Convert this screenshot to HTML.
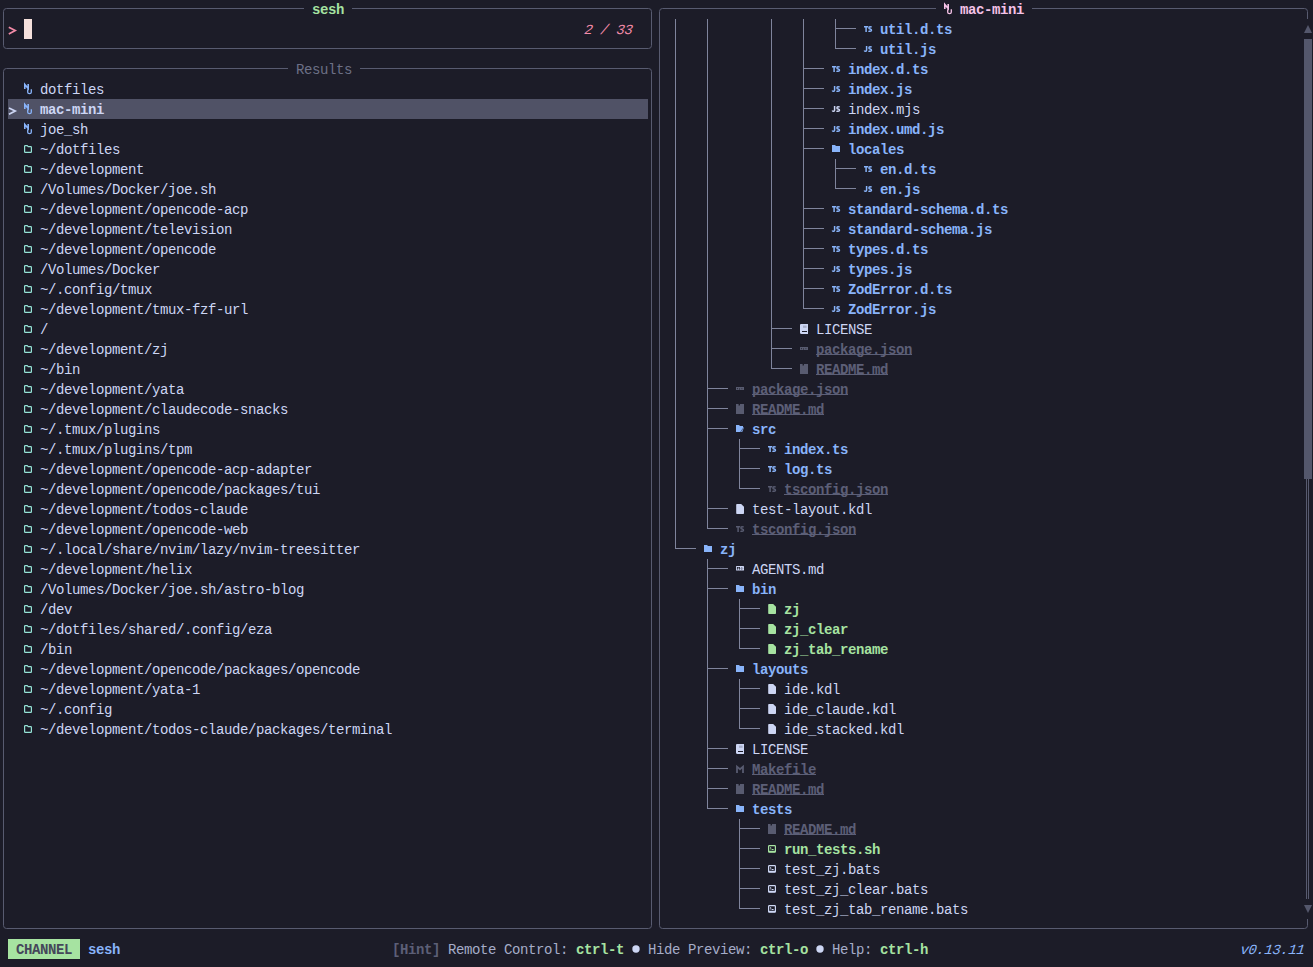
<!DOCTYPE html>
<html><head><meta charset="utf-8"><style>
html,body{margin:0;padding:0;}
body{width:1313px;height:967px;background:#1c1c28;overflow:hidden;position:relative;}
.t{position:absolute;height:20px;line-height:20px;white-space:pre;font-family:"Liberation Mono",monospace;font-size:14.0px;letter-spacing:-0.4014px;text-underline-offset:0px;text-decoration-skip-ink:none;}
svg{position:absolute;left:0;top:0;}
</style></head><body>
<svg width="1313" height="967" viewBox="0 0 1313 967" shape-rendering="auto">
<rect x="3.5" y="8.5" width="648" height="40" rx="3" stroke="#585b70" stroke-width="1" fill="none"/>
<rect x="304" y="7" width="48" height="3" fill="#1c1c28" />
<path d="M8.8,27.3 L15.2,30.6 L8.8,33.9" stroke="#f38ba8" stroke-width="1.7" fill="none"/>
<rect x="24" y="19" width="8" height="20" fill="#f5e0dc" />
<rect x="3.5" y="68.5" width="648" height="860" rx="3" stroke="#585b70" stroke-width="1" fill="none"/>
<rect x="288" y="67" width="72" height="3" fill="#1c1c28" />
<rect x="8" y="99" width="640" height="20" fill="#505266" />
<path d="M9,108 L15.2,111.1 L9,114.2" stroke="#cdd6f4" stroke-width="1.7" fill="none"/>
<path d="M24.8,89 V84.5 L28.2,88.5 V84" stroke="#89b4fa" stroke-width="1.6" fill="none"/>
<path d="M27.7,89.2 V92.3 Q27.7,93.6 29.5,93.6 Q31.3,93.6 31.3,92.3 V89.2" stroke="#89b4fa" stroke-width="1.3" fill="none"/>
<path d="M24.8,109 V104.5 L28.2,108.5 V104" stroke="#89b4fa" stroke-width="1.6" fill="none"/>
<path d="M27.7,109.2 V112.3 Q27.7,113.6 29.5,113.6 Q31.3,113.6 31.3,112.3 V109.2" stroke="#89b4fa" stroke-width="1.3" fill="none"/>
<path d="M24.8,129 V124.5 L28.2,128.5 V124" stroke="#89b4fa" stroke-width="1.6" fill="none"/>
<path d="M27.7,129.2 V132.3 Q27.7,133.6 29.5,133.6 Q31.3,133.6 31.3,132.3 V129.2" stroke="#89b4fa" stroke-width="1.3" fill="none"/>
<path d="M24.6,146.2 Q24.6,145.6 25.4,145.6 H27.2 L28.2,146.6 H30.8 Q31.4,146.6 31.4,147.4 V151.8 Q31.4,152.4 30.8,152.4 H25.2 Q24.6,152.4 24.6,151.8 Z" stroke="#94e2d5" stroke-width="1.2" fill="none"/>
<path d="M24.6,166.2 Q24.6,165.6 25.4,165.6 H27.2 L28.2,166.6 H30.8 Q31.4,166.6 31.4,167.4 V171.8 Q31.4,172.4 30.8,172.4 H25.2 Q24.6,172.4 24.6,171.8 Z" stroke="#94e2d5" stroke-width="1.2" fill="none"/>
<path d="M24.6,186.2 Q24.6,185.6 25.4,185.6 H27.2 L28.2,186.6 H30.8 Q31.4,186.6 31.4,187.4 V191.8 Q31.4,192.4 30.8,192.4 H25.2 Q24.6,192.4 24.6,191.8 Z" stroke="#94e2d5" stroke-width="1.2" fill="none"/>
<path d="M24.6,206.2 Q24.6,205.6 25.4,205.6 H27.2 L28.2,206.6 H30.8 Q31.4,206.6 31.4,207.4 V211.8 Q31.4,212.4 30.8,212.4 H25.2 Q24.6,212.4 24.6,211.8 Z" stroke="#94e2d5" stroke-width="1.2" fill="none"/>
<path d="M24.6,226.2 Q24.6,225.6 25.4,225.6 H27.2 L28.2,226.6 H30.8 Q31.4,226.6 31.4,227.4 V231.8 Q31.4,232.4 30.8,232.4 H25.2 Q24.6,232.4 24.6,231.8 Z" stroke="#94e2d5" stroke-width="1.2" fill="none"/>
<path d="M24.6,246.2 Q24.6,245.6 25.4,245.6 H27.2 L28.2,246.6 H30.8 Q31.4,246.6 31.4,247.4 V251.8 Q31.4,252.4 30.8,252.4 H25.2 Q24.6,252.4 24.6,251.8 Z" stroke="#94e2d5" stroke-width="1.2" fill="none"/>
<path d="M24.6,266.2 Q24.6,265.6 25.4,265.6 H27.2 L28.2,266.6 H30.8 Q31.4,266.6 31.4,267.4 V271.8 Q31.4,272.4 30.8,272.4 H25.2 Q24.6,272.4 24.6,271.8 Z" stroke="#94e2d5" stroke-width="1.2" fill="none"/>
<path d="M24.6,286.2 Q24.6,285.6 25.4,285.6 H27.2 L28.2,286.6 H30.8 Q31.4,286.6 31.4,287.4 V291.8 Q31.4,292.4 30.8,292.4 H25.2 Q24.6,292.4 24.6,291.8 Z" stroke="#94e2d5" stroke-width="1.2" fill="none"/>
<path d="M24.6,306.2 Q24.6,305.6 25.4,305.6 H27.2 L28.2,306.6 H30.8 Q31.4,306.6 31.4,307.4 V311.8 Q31.4,312.4 30.8,312.4 H25.2 Q24.6,312.4 24.6,311.8 Z" stroke="#94e2d5" stroke-width="1.2" fill="none"/>
<path d="M24.6,326.2 Q24.6,325.6 25.4,325.6 H27.2 L28.2,326.6 H30.8 Q31.4,326.6 31.4,327.4 V331.8 Q31.4,332.4 30.8,332.4 H25.2 Q24.6,332.4 24.6,331.8 Z" stroke="#94e2d5" stroke-width="1.2" fill="none"/>
<path d="M24.6,346.2 Q24.6,345.6 25.4,345.6 H27.2 L28.2,346.6 H30.8 Q31.4,346.6 31.4,347.4 V351.8 Q31.4,352.4 30.8,352.4 H25.2 Q24.6,352.4 24.6,351.8 Z" stroke="#94e2d5" stroke-width="1.2" fill="none"/>
<path d="M24.6,366.2 Q24.6,365.6 25.4,365.6 H27.2 L28.2,366.6 H30.8 Q31.4,366.6 31.4,367.4 V371.8 Q31.4,372.4 30.8,372.4 H25.2 Q24.6,372.4 24.6,371.8 Z" stroke="#94e2d5" stroke-width="1.2" fill="none"/>
<path d="M24.6,386.2 Q24.6,385.6 25.4,385.6 H27.2 L28.2,386.6 H30.8 Q31.4,386.6 31.4,387.4 V391.8 Q31.4,392.4 30.8,392.4 H25.2 Q24.6,392.4 24.6,391.8 Z" stroke="#94e2d5" stroke-width="1.2" fill="none"/>
<path d="M24.6,406.2 Q24.6,405.6 25.4,405.6 H27.2 L28.2,406.6 H30.8 Q31.4,406.6 31.4,407.4 V411.8 Q31.4,412.4 30.8,412.4 H25.2 Q24.6,412.4 24.6,411.8 Z" stroke="#94e2d5" stroke-width="1.2" fill="none"/>
<path d="M24.6,426.2 Q24.6,425.6 25.4,425.6 H27.2 L28.2,426.6 H30.8 Q31.4,426.6 31.4,427.4 V431.8 Q31.4,432.4 30.8,432.4 H25.2 Q24.6,432.4 24.6,431.8 Z" stroke="#94e2d5" stroke-width="1.2" fill="none"/>
<path d="M24.6,446.2 Q24.6,445.6 25.4,445.6 H27.2 L28.2,446.6 H30.8 Q31.4,446.6 31.4,447.4 V451.8 Q31.4,452.4 30.8,452.4 H25.2 Q24.6,452.4 24.6,451.8 Z" stroke="#94e2d5" stroke-width="1.2" fill="none"/>
<path d="M24.6,466.2 Q24.6,465.6 25.4,465.6 H27.2 L28.2,466.6 H30.8 Q31.4,466.6 31.4,467.4 V471.8 Q31.4,472.4 30.8,472.4 H25.2 Q24.6,472.4 24.6,471.8 Z" stroke="#94e2d5" stroke-width="1.2" fill="none"/>
<path d="M24.6,486.2 Q24.6,485.6 25.4,485.6 H27.2 L28.2,486.6 H30.8 Q31.4,486.6 31.4,487.4 V491.8 Q31.4,492.4 30.8,492.4 H25.2 Q24.6,492.4 24.6,491.8 Z" stroke="#94e2d5" stroke-width="1.2" fill="none"/>
<path d="M24.6,506.2 Q24.6,505.6 25.4,505.6 H27.2 L28.2,506.6 H30.8 Q31.4,506.6 31.4,507.4 V511.8 Q31.4,512.4 30.8,512.4 H25.2 Q24.6,512.4 24.6,511.8 Z" stroke="#94e2d5" stroke-width="1.2" fill="none"/>
<path d="M24.6,526.2 Q24.6,525.6 25.4,525.6 H27.2 L28.2,526.6 H30.8 Q31.4,526.6 31.4,527.4 V531.8 Q31.4,532.4 30.8,532.4 H25.2 Q24.6,532.4 24.6,531.8 Z" stroke="#94e2d5" stroke-width="1.2" fill="none"/>
<path d="M24.6,546.2 Q24.6,545.6 25.4,545.6 H27.2 L28.2,546.6 H30.8 Q31.4,546.6 31.4,547.4 V551.8 Q31.4,552.4 30.8,552.4 H25.2 Q24.6,552.4 24.6,551.8 Z" stroke="#94e2d5" stroke-width="1.2" fill="none"/>
<path d="M24.6,566.2 Q24.6,565.6 25.4,565.6 H27.2 L28.2,566.6 H30.8 Q31.4,566.6 31.4,567.4 V571.8 Q31.4,572.4 30.8,572.4 H25.2 Q24.6,572.4 24.6,571.8 Z" stroke="#94e2d5" stroke-width="1.2" fill="none"/>
<path d="M24.6,586.2 Q24.6,585.6 25.4,585.6 H27.2 L28.2,586.6 H30.8 Q31.4,586.6 31.4,587.4 V591.8 Q31.4,592.4 30.8,592.4 H25.2 Q24.6,592.4 24.6,591.8 Z" stroke="#94e2d5" stroke-width="1.2" fill="none"/>
<path d="M24.6,606.2 Q24.6,605.6 25.4,605.6 H27.2 L28.2,606.6 H30.8 Q31.4,606.6 31.4,607.4 V611.8 Q31.4,612.4 30.8,612.4 H25.2 Q24.6,612.4 24.6,611.8 Z" stroke="#94e2d5" stroke-width="1.2" fill="none"/>
<path d="M24.6,626.2 Q24.6,625.6 25.4,625.6 H27.2 L28.2,626.6 H30.8 Q31.4,626.6 31.4,627.4 V631.8 Q31.4,632.4 30.8,632.4 H25.2 Q24.6,632.4 24.6,631.8 Z" stroke="#94e2d5" stroke-width="1.2" fill="none"/>
<path d="M24.6,646.2 Q24.6,645.6 25.4,645.6 H27.2 L28.2,646.6 H30.8 Q31.4,646.6 31.4,647.4 V651.8 Q31.4,652.4 30.8,652.4 H25.2 Q24.6,652.4 24.6,651.8 Z" stroke="#94e2d5" stroke-width="1.2" fill="none"/>
<path d="M24.6,666.2 Q24.6,665.6 25.4,665.6 H27.2 L28.2,666.6 H30.8 Q31.4,666.6 31.4,667.4 V671.8 Q31.4,672.4 30.8,672.4 H25.2 Q24.6,672.4 24.6,671.8 Z" stroke="#94e2d5" stroke-width="1.2" fill="none"/>
<path d="M24.6,686.2 Q24.6,685.6 25.4,685.6 H27.2 L28.2,686.6 H30.8 Q31.4,686.6 31.4,687.4 V691.8 Q31.4,692.4 30.8,692.4 H25.2 Q24.6,692.4 24.6,691.8 Z" stroke="#94e2d5" stroke-width="1.2" fill="none"/>
<path d="M24.6,706.2 Q24.6,705.6 25.4,705.6 H27.2 L28.2,706.6 H30.8 Q31.4,706.6 31.4,707.4 V711.8 Q31.4,712.4 30.8,712.4 H25.2 Q24.6,712.4 24.6,711.8 Z" stroke="#94e2d5" stroke-width="1.2" fill="none"/>
<path d="M24.6,726.2 Q24.6,725.6 25.4,725.6 H27.2 L28.2,726.6 H30.8 Q31.4,726.6 31.4,727.4 V731.8 Q31.4,732.4 30.8,732.4 H25.2 Q24.6,732.4 24.6,731.8 Z" stroke="#94e2d5" stroke-width="1.2" fill="none"/>
<rect x="659.5" y="8.5" width="648" height="920" rx="3" stroke="#585b70" stroke-width="1" fill="none"/>
<rect x="936" y="7" width="96" height="3" fill="#1c1c28" />
<rect x="1304" y="19" width="9" height="900" fill="#1c1c28" />
<path d="M944.8,9 V4.5 L948.2,8.5 V4" stroke="#f5c2e7" stroke-width="1.6" fill="none"/>
<path d="M947.7,9.2 V12.3 Q947.7,13.6 949.5,13.6 Q951.3,13.6 951.3,12.3 V9.2" stroke="#f5c2e7" stroke-width="1.3" fill="none"/>
<path d="M1304,33 L1308,25 L1312,33 Z" fill="#54576c"/>
<rect x="1304" y="39" width="8" height="440" fill="#54576c" />
<rect x="1306" y="479" width="1" height="420" fill="#585b70" />
<rect x="1308" y="479" width="1" height="420" fill="#585b70" />
<path d="M1304,905 L1312,905 L1308,913 Z" fill="#54576c"/>
<rect x="675" y="19" width="1" height="529" fill="#7f849c" />
<rect x="707" y="19" width="1" height="509" fill="#7f849c" />
<rect x="707" y="559" width="1" height="249" fill="#7f849c" />
<rect x="739" y="439" width="1" height="49" fill="#7f849c" />
<rect x="739" y="599" width="1" height="49" fill="#7f849c" />
<rect x="739" y="679" width="1" height="49" fill="#7f849c" />
<rect x="739" y="819" width="1" height="89" fill="#7f849c" />
<rect x="771" y="19" width="1" height="349" fill="#7f849c" />
<rect x="803" y="19" width="1" height="289" fill="#7f849c" />
<rect x="835" y="19" width="1" height="29" fill="#7f849c" />
<rect x="835" y="159" width="1" height="29" fill="#7f849c" />
<rect x="835" y="28" width="21" height="1" fill="#7f849c" />
<rect x="835" y="48" width="21" height="1" fill="#7f849c" />
<rect x="803" y="68" width="21" height="1" fill="#7f849c" />
<rect x="803" y="88" width="21" height="1" fill="#7f849c" />
<rect x="803" y="108" width="21" height="1" fill="#7f849c" />
<rect x="803" y="128" width="21" height="1" fill="#7f849c" />
<rect x="803" y="148" width="21" height="1" fill="#7f849c" />
<rect x="835" y="168" width="21" height="1" fill="#7f849c" />
<rect x="835" y="188" width="21" height="1" fill="#7f849c" />
<rect x="803" y="208" width="21" height="1" fill="#7f849c" />
<rect x="803" y="228" width="21" height="1" fill="#7f849c" />
<rect x="803" y="248" width="21" height="1" fill="#7f849c" />
<rect x="803" y="268" width="21" height="1" fill="#7f849c" />
<rect x="803" y="288" width="21" height="1" fill="#7f849c" />
<rect x="803" y="308" width="21" height="1" fill="#7f849c" />
<rect x="771" y="328" width="21" height="1" fill="#7f849c" />
<rect x="771" y="348" width="21" height="1" fill="#7f849c" />
<rect x="771" y="368" width="21" height="1" fill="#7f849c" />
<rect x="707" y="388" width="21" height="1" fill="#7f849c" />
<rect x="707" y="408" width="21" height="1" fill="#7f849c" />
<rect x="707" y="428" width="21" height="1" fill="#7f849c" />
<rect x="739" y="448" width="21" height="1" fill="#7f849c" />
<rect x="739" y="468" width="21" height="1" fill="#7f849c" />
<rect x="739" y="488" width="21" height="1" fill="#7f849c" />
<rect x="707" y="508" width="21" height="1" fill="#7f849c" />
<rect x="707" y="528" width="21" height="1" fill="#7f849c" />
<rect x="675" y="548" width="21" height="1" fill="#7f849c" />
<rect x="707" y="568" width="21" height="1" fill="#7f849c" />
<rect x="707" y="588" width="21" height="1" fill="#7f849c" />
<rect x="739" y="608" width="21" height="1" fill="#7f849c" />
<rect x="739" y="628" width="21" height="1" fill="#7f849c" />
<rect x="739" y="648" width="21" height="1" fill="#7f849c" />
<rect x="707" y="668" width="21" height="1" fill="#7f849c" />
<rect x="739" y="688" width="21" height="1" fill="#7f849c" />
<rect x="739" y="708" width="21" height="1" fill="#7f849c" />
<rect x="739" y="728" width="21" height="1" fill="#7f849c" />
<rect x="707" y="748" width="21" height="1" fill="#7f849c" />
<rect x="707" y="768" width="21" height="1" fill="#7f849c" />
<rect x="707" y="788" width="21" height="1" fill="#7f849c" />
<rect x="707" y="808" width="21" height="1" fill="#7f849c" />
<rect x="739" y="828" width="21" height="1" fill="#7f849c" />
<rect x="739" y="848" width="21" height="1" fill="#7f849c" />
<rect x="739" y="868" width="21" height="1" fill="#7f849c" />
<rect x="739" y="888" width="21" height="1" fill="#7f849c" />
<rect x="739" y="908" width="21" height="1" fill="#7f849c" />
<path d="M864,26.75 H868.2 M866.1,26.75 V32" stroke="#89b4fa" stroke-width="1.5" fill="none"/>
<path d="M871.6,27.3 Q871.1,26.75 870,26.75 Q868.9,26.75 868.9,27.9 Q868.9,28.8 870.2,29.1 Q871.5,29.4 871.5,30.3 Q871.5,31.25 870.1,31.25 Q869,31.25 868.6,30.7" stroke="#89b4fa" stroke-width="1.5" fill="none"/>
<path d="M866.6,46 V50.3 Q866.6,51.25 865.6,51.25 Q864.6,51.25 864.3,50.4" stroke="#89b4fa" stroke-width="1.5" fill="none"/>
<path d="M871.6,47.3 Q871.1,46.75 870,46.75 Q868.9,46.75 868.9,47.9 Q868.9,48.8 870.2,49.1 Q871.5,49.4 871.5,50.3 Q871.5,51.25 870.1,51.25 Q869,51.25 868.6,50.7" stroke="#89b4fa" stroke-width="1.5" fill="none"/>
<path d="M832,66.75 H836.2 M834.1,66.75 V72" stroke="#89b4fa" stroke-width="1.5" fill="none"/>
<path d="M839.6,67.3 Q839.1,66.75 838,66.75 Q836.9,66.75 836.9,67.9 Q836.9,68.8 838.2,69.1 Q839.5,69.4 839.5,70.3 Q839.5,71.25 838.1,71.25 Q837,71.25 836.6,70.7" stroke="#89b4fa" stroke-width="1.5" fill="none"/>
<path d="M834.6,86 V90.3 Q834.6,91.25 833.6,91.25 Q832.6,91.25 832.3,90.4" stroke="#89b4fa" stroke-width="1.5" fill="none"/>
<path d="M839.6,87.3 Q839.1,86.75 838,86.75 Q836.9,86.75 836.9,87.9 Q836.9,88.8 838.2,89.1 Q839.5,89.4 839.5,90.3 Q839.5,91.25 838.1,91.25 Q837,91.25 836.6,90.7" stroke="#89b4fa" stroke-width="1.5" fill="none"/>
<path d="M834.6,106 V110.3 Q834.6,111.25 833.6,111.25 Q832.6,111.25 832.3,110.4" stroke="#cdd6f4" stroke-width="1.5" fill="none"/>
<path d="M839.6,107.3 Q839.1,106.75 838,106.75 Q836.9,106.75 836.9,107.9 Q836.9,108.8 838.2,109.1 Q839.5,109.4 839.5,110.3 Q839.5,111.25 838.1,111.25 Q837,111.25 836.6,110.7" stroke="#cdd6f4" stroke-width="1.5" fill="none"/>
<path d="M834.6,126 V130.3 Q834.6,131.25 833.6,131.25 Q832.6,131.25 832.3,130.4" stroke="#89b4fa" stroke-width="1.5" fill="none"/>
<path d="M839.6,127.3 Q839.1,126.75 838,126.75 Q836.9,126.75 836.9,127.9 Q836.9,128.8 838.2,129.1 Q839.5,129.4 839.5,130.3 Q839.5,131.25 838.1,131.25 Q837,131.25 836.6,130.7" stroke="#89b4fa" stroke-width="1.5" fill="none"/>
<path d="M832,145 V152 H840 V146 H836 L835,145 Z" fill="#89b4fa"/>
<path d="M864,166.75 H868.2 M866.1,166.75 V172" stroke="#89b4fa" stroke-width="1.5" fill="none"/>
<path d="M871.6,167.3 Q871.1,166.75 870,166.75 Q868.9,166.75 868.9,167.9 Q868.9,168.8 870.2,169.1 Q871.5,169.4 871.5,170.3 Q871.5,171.25 870.1,171.25 Q869,171.25 868.6,170.7" stroke="#89b4fa" stroke-width="1.5" fill="none"/>
<path d="M866.6,186 V190.3 Q866.6,191.25 865.6,191.25 Q864.6,191.25 864.3,190.4" stroke="#89b4fa" stroke-width="1.5" fill="none"/>
<path d="M871.6,187.3 Q871.1,186.75 870,186.75 Q868.9,186.75 868.9,187.9 Q868.9,188.8 870.2,189.1 Q871.5,189.4 871.5,190.3 Q871.5,191.25 870.1,191.25 Q869,191.25 868.6,190.7" stroke="#89b4fa" stroke-width="1.5" fill="none"/>
<path d="M832,206.75 H836.2 M834.1,206.75 V212" stroke="#89b4fa" stroke-width="1.5" fill="none"/>
<path d="M839.6,207.3 Q839.1,206.75 838,206.75 Q836.9,206.75 836.9,207.9 Q836.9,208.8 838.2,209.1 Q839.5,209.4 839.5,210.3 Q839.5,211.25 838.1,211.25 Q837,211.25 836.6,210.7" stroke="#89b4fa" stroke-width="1.5" fill="none"/>
<path d="M834.6,226 V230.3 Q834.6,231.25 833.6,231.25 Q832.6,231.25 832.3,230.4" stroke="#89b4fa" stroke-width="1.5" fill="none"/>
<path d="M839.6,227.3 Q839.1,226.75 838,226.75 Q836.9,226.75 836.9,227.9 Q836.9,228.8 838.2,229.1 Q839.5,229.4 839.5,230.3 Q839.5,231.25 838.1,231.25 Q837,231.25 836.6,230.7" stroke="#89b4fa" stroke-width="1.5" fill="none"/>
<path d="M832,246.75 H836.2 M834.1,246.75 V252" stroke="#89b4fa" stroke-width="1.5" fill="none"/>
<path d="M839.6,247.3 Q839.1,246.75 838,246.75 Q836.9,246.75 836.9,247.9 Q836.9,248.8 838.2,249.1 Q839.5,249.4 839.5,250.3 Q839.5,251.25 838.1,251.25 Q837,251.25 836.6,250.7" stroke="#89b4fa" stroke-width="1.5" fill="none"/>
<path d="M834.6,266 V270.3 Q834.6,271.25 833.6,271.25 Q832.6,271.25 832.3,270.4" stroke="#89b4fa" stroke-width="1.5" fill="none"/>
<path d="M839.6,267.3 Q839.1,266.75 838,266.75 Q836.9,266.75 836.9,267.9 Q836.9,268.8 838.2,269.1 Q839.5,269.4 839.5,270.3 Q839.5,271.25 838.1,271.25 Q837,271.25 836.6,270.7" stroke="#89b4fa" stroke-width="1.5" fill="none"/>
<path d="M832,286.75 H836.2 M834.1,286.75 V292" stroke="#89b4fa" stroke-width="1.5" fill="none"/>
<path d="M839.6,287.3 Q839.1,286.75 838,286.75 Q836.9,286.75 836.9,287.9 Q836.9,288.8 838.2,289.1 Q839.5,289.4 839.5,290.3 Q839.5,291.25 838.1,291.25 Q837,291.25 836.6,290.7" stroke="#89b4fa" stroke-width="1.5" fill="none"/>
<path d="M834.6,306 V310.3 Q834.6,311.25 833.6,311.25 Q832.6,311.25 832.3,310.4" stroke="#89b4fa" stroke-width="1.5" fill="none"/>
<path d="M839.6,307.3 Q839.1,306.75 838,306.75 Q836.9,306.75 836.9,307.9 Q836.9,308.8 838.2,309.1 Q839.5,309.4 839.5,310.3 Q839.5,311.25 838.1,311.25 Q837,311.25 836.6,310.7" stroke="#89b4fa" stroke-width="1.5" fill="none"/>
<path d="M801,324 H808 V334 H801.6 Q800,334 800,332.5 V325 Q800,324 801,324 Z" fill="#cdd6f4"/>
<rect x="803" y="325.6" width="3.6" height="2.2" fill="#a6adc8" />
<rect x="802" y="331" width="5" height="1" fill="#1c1c28" />
<rect x="800" y="347" width="8" height="3" fill="#585b70" />
<rect x="801" y="348" width="1" height="1.2" fill="#1c1c28" opacity="0.7"/>
<rect x="803.2" y="348" width="0.8" height="2" fill="#1c1c28" opacity="0.6"/>
<rect x="805.5" y="348" width="0.8" height="1.2" fill="#1c1c28" opacity="0.7"/>
<path d="M800,364 H802.6 V365.8 L803.3,365.3 L804,365.8 V364 H808 V374 H800 Z" fill="#585b70"/>
<rect x="736" y="387" width="8" height="3" fill="#585b70" />
<rect x="737" y="388" width="1" height="1.2" fill="#1c1c28" opacity="0.7"/>
<rect x="739.2" y="388" width="0.8" height="2" fill="#1c1c28" opacity="0.6"/>
<rect x="741.5" y="388" width="0.8" height="1.2" fill="#1c1c28" opacity="0.7"/>
<path d="M736,404 H738.6 V405.8 L739.3,405.3 L740,405.8 V404 H744 V414 H736 Z" fill="#585b70"/>
<path d="M736,425 H739 L740,426 H743 V427.6 H744 L742.2,432 H736 Z" fill="#89b4fa"/>
<path d="M740.6,432 L743.2,428.2" stroke="#1c1c28" stroke-width="0.7" opacity="0.8"/>
<path d="M768,446.75 H772.2 M770.1,446.75 V452" stroke="#89b4fa" stroke-width="1.5" fill="none"/>
<path d="M775.6,447.3 Q775.1,446.75 774,446.75 Q772.9,446.75 772.9,447.9 Q772.9,448.8 774.2,449.1 Q775.5,449.4 775.5,450.3 Q775.5,451.25 774.1,451.25 Q773,451.25 772.6,450.7" stroke="#89b4fa" stroke-width="1.5" fill="none"/>
<path d="M768,466.75 H772.2 M770.1,466.75 V472" stroke="#89b4fa" stroke-width="1.5" fill="none"/>
<path d="M775.6,467.3 Q775.1,466.75 774,466.75 Q772.9,466.75 772.9,467.9 Q772.9,468.8 774.2,469.1 Q775.5,469.4 775.5,470.3 Q775.5,471.25 774.1,471.25 Q773,471.25 772.6,470.7" stroke="#89b4fa" stroke-width="1.5" fill="none"/>
<path d="M768,486.75 H772.2 M770.1,486.75 V492" stroke="#585b70" stroke-width="1.5" fill="none"/>
<path d="M775.6,487.3 Q775.1,486.75 774,486.75 Q772.9,486.75 772.9,487.9 Q772.9,488.8 774.2,489.1 Q775.5,489.4 775.5,490.3 Q775.5,491.25 774.1,491.25 Q773,491.25 772.6,490.7" stroke="#585b70" stroke-width="1.5" fill="none"/>
<path d="M736.2,504.8 Q736.2,504 737,504 H741.2 L744,506.8 V513.2 Q744,514 743.2,514 H737 Q736.2,514 736.2,513.2 Z" fill="#cdd6f4"/>
<path d="M736,526.75 H740.2 M738.1,526.75 V532" stroke="#585b70" stroke-width="1.5" fill="none"/>
<path d="M743.6,527.3 Q743.1,526.75 742,526.75 Q740.9,526.75 740.9,527.9 Q740.9,528.8 742.2,529.1 Q743.5,529.4 743.5,530.3 Q743.5,531.25 742.1,531.25 Q741,531.25 740.6,530.7" stroke="#585b70" stroke-width="1.5" fill="none"/>
<path d="M704,545 V552 H712 V546 H708 L707,545 Z" fill="#89b4fa"/>
<rect x="736" y="566" width="8" height="4.6" rx="0.6" fill="#cdd6f4"/>
<path d="M737.4,569.6 V567 L738.4,568.2 L739.4,567 V569.6" stroke="#1c1c28" stroke-width="0.9" fill="none"/>
<path d="M741.8,567 V569 M740.6,568.4 L741.8,569.6 L743,568.4" stroke="#6c7086" stroke-width="0.9" fill="none"/>
<path d="M736,585 V592 H744 V586 H740 L739,585 Z" fill="#89b4fa"/>
<path d="M768.2,604.8 Q768.2,604 769,604 H773.2 L776,606.8 V613.2 Q776,614 775.2,614 H769 Q768.2,614 768.2,613.2 Z" fill="#a6e3a1"/>
<path d="M768.2,624.8 Q768.2,624 769,624 H773.2 L776,626.8 V633.2 Q776,634 775.2,634 H769 Q768.2,634 768.2,633.2 Z" fill="#a6e3a1"/>
<path d="M768.2,644.8 Q768.2,644 769,644 H773.2 L776,646.8 V653.2 Q776,654 775.2,654 H769 Q768.2,654 768.2,653.2 Z" fill="#a6e3a1"/>
<path d="M736,665 V672 H744 V666 H740 L739,665 Z" fill="#89b4fa"/>
<path d="M768.2,684.8 Q768.2,684 769,684 H773.2 L776,686.8 V693.2 Q776,694 775.2,694 H769 Q768.2,694 768.2,693.2 Z" fill="#cdd6f4"/>
<path d="M768.2,704.8 Q768.2,704 769,704 H773.2 L776,706.8 V713.2 Q776,714 775.2,714 H769 Q768.2,714 768.2,713.2 Z" fill="#cdd6f4"/>
<path d="M768.2,724.8 Q768.2,724 769,724 H773.2 L776,726.8 V733.2 Q776,734 775.2,734 H769 Q768.2,734 768.2,733.2 Z" fill="#cdd6f4"/>
<path d="M737,744 H744 V754 H737.6 Q736,754 736,752.5 V745 Q736,744 737,744 Z" fill="#cdd6f4"/>
<rect x="739" y="745.6" width="3.6" height="2.2" fill="#a6adc8" />
<rect x="738" y="751" width="5" height="1" fill="#1c1c28" />
<path d="M737,773 V766.6 L740,769.2 L743,766.6 V773" stroke="#585b70" stroke-width="1.8" fill="none" stroke-linejoin="miter"/>
<path d="M736,784 H738.6 V785.8 L739.3,785.3 L740,785.8 V784 H744 V794 H736 Z" fill="#585b70"/>
<path d="M736,805 V812 H744 V806 H740 L739,805 Z" fill="#89b4fa"/>
<path d="M768,824 H770.6 V825.8 L771.3,825.3 L772,825.8 V824 H776 V834 H768 Z" fill="#585b70"/>
<rect x="768.6" y="845.6" width="6.8" height="6.6" rx="0.8" stroke="#a6e3a1" stroke-width="1.2" fill="none"/>
<rect x="768.6" y="850.8" width="6.8" height="1.4" fill="#a6e3a1" />
<path d="M770,847.3 L771.2,848.3 L770,849.3" stroke="#a6e3a1" stroke-width="0.9" fill="none"/>
<rect x="771.6" y="849" width="2" height="1" fill="#a6e3a1" />
<rect x="768.6" y="865.6" width="6.8" height="6.6" rx="0.8" stroke="#cdd6f4" stroke-width="1.2" fill="none"/>
<rect x="768.6" y="870.8" width="6.8" height="1.4" fill="#cdd6f4" />
<path d="M770,867.3 L771.2,868.3 L770,869.3" stroke="#cdd6f4" stroke-width="0.9" fill="none"/>
<rect x="771.6" y="869" width="2" height="1" fill="#cdd6f4" />
<rect x="768.6" y="885.6" width="6.8" height="6.6" rx="0.8" stroke="#cdd6f4" stroke-width="1.2" fill="none"/>
<rect x="768.6" y="890.8" width="6.8" height="1.4" fill="#cdd6f4" />
<path d="M770,887.3 L771.2,888.3 L770,889.3" stroke="#cdd6f4" stroke-width="0.9" fill="none"/>
<rect x="771.6" y="889" width="2" height="1" fill="#cdd6f4" />
<rect x="768.6" y="905.6" width="6.8" height="6.6" rx="0.8" stroke="#cdd6f4" stroke-width="1.2" fill="none"/>
<rect x="768.6" y="910.8" width="6.8" height="1.4" fill="#cdd6f4" />
<path d="M770,907.3 L771.2,908.3 L770,909.3" stroke="#cdd6f4" stroke-width="0.9" fill="none"/>
<rect x="771.6" y="909" width="2" height="1" fill="#cdd6f4" />
<rect x="8" y="939" width="72" height="20" fill="#a6e3a1" />
<circle cx="636" cy="949" r="3.7" fill="#cdd6f4"/>
<circle cx="820" cy="949" r="3.7" fill="#cdd6f4"/>
</svg>
<div class="t" style="left:312px;top:0px;color:#a6e3a1;font-weight:bold;">sesh</div>
<div class="t" style="left:584px;top:20px;color:#f38ba8;font-style:italic;transform:skewX(-7deg);transform-origin:0 15px;">2 / 33</div>
<div class="t" style="left:296px;top:60px;color:#6c7086;">Results</div>
<div class="t" style="left:40px;top:80px;color:#cdd6f4;">dotfiles</div>
<div class="t" style="left:40px;top:100px;color:#cdd6f4;font-weight:bold;">mac-mini</div>
<div class="t" style="left:40px;top:120px;color:#cdd6f4;">joe_sh</div>
<div class="t" style="left:40px;top:140px;color:#cdd6f4;">~/dotfiles</div>
<div class="t" style="left:40px;top:160px;color:#cdd6f4;">~/development</div>
<div class="t" style="left:40px;top:180px;color:#cdd6f4;">/Volumes/Docker/joe.sh</div>
<div class="t" style="left:40px;top:200px;color:#cdd6f4;">~/development/opencode-acp</div>
<div class="t" style="left:40px;top:220px;color:#cdd6f4;">~/development/television</div>
<div class="t" style="left:40px;top:240px;color:#cdd6f4;">~/development/opencode</div>
<div class="t" style="left:40px;top:260px;color:#cdd6f4;">/Volumes/Docker</div>
<div class="t" style="left:40px;top:280px;color:#cdd6f4;">~/.config/tmux</div>
<div class="t" style="left:40px;top:300px;color:#cdd6f4;">~/development/tmux-fzf-url</div>
<div class="t" style="left:40px;top:320px;color:#cdd6f4;">/</div>
<div class="t" style="left:40px;top:340px;color:#cdd6f4;">~/development/zj</div>
<div class="t" style="left:40px;top:360px;color:#cdd6f4;">~/bin</div>
<div class="t" style="left:40px;top:380px;color:#cdd6f4;">~/development/yata</div>
<div class="t" style="left:40px;top:400px;color:#cdd6f4;">~/development/claudecode-snacks</div>
<div class="t" style="left:40px;top:420px;color:#cdd6f4;">~/.tmux/plugins</div>
<div class="t" style="left:40px;top:440px;color:#cdd6f4;">~/.tmux/plugins/tpm</div>
<div class="t" style="left:40px;top:460px;color:#cdd6f4;">~/development/opencode-acp-adapter</div>
<div class="t" style="left:40px;top:480px;color:#cdd6f4;">~/development/opencode/packages/tui</div>
<div class="t" style="left:40px;top:500px;color:#cdd6f4;">~/development/todos-claude</div>
<div class="t" style="left:40px;top:520px;color:#cdd6f4;">~/development/opencode-web</div>
<div class="t" style="left:40px;top:540px;color:#cdd6f4;">~/.local/share/nvim/lazy/nvim-treesitter</div>
<div class="t" style="left:40px;top:560px;color:#cdd6f4;">~/development/helix</div>
<div class="t" style="left:40px;top:580px;color:#cdd6f4;">/Volumes/Docker/joe.sh/astro-blog</div>
<div class="t" style="left:40px;top:600px;color:#cdd6f4;">/dev</div>
<div class="t" style="left:40px;top:620px;color:#cdd6f4;">~/dotfiles/shared/.config/eza</div>
<div class="t" style="left:40px;top:640px;color:#cdd6f4;">/bin</div>
<div class="t" style="left:40px;top:660px;color:#cdd6f4;">~/development/opencode/packages/opencode</div>
<div class="t" style="left:40px;top:680px;color:#cdd6f4;">~/development/yata-1</div>
<div class="t" style="left:40px;top:700px;color:#cdd6f4;">~/.config</div>
<div class="t" style="left:40px;top:720px;color:#cdd6f4;">~/development/todos-claude/packages/terminal</div>
<div class="t" style="left:960px;top:0px;color:#f5c2e7;font-weight:bold;">mac-mini</div>
<div class="t" style="left:880px;top:20px;color:#89b4fa;font-weight:bold;">util.d.ts</div>
<div class="t" style="left:880px;top:40px;color:#89b4fa;font-weight:bold;">util.js</div>
<div class="t" style="left:848px;top:60px;color:#89b4fa;font-weight:bold;">index.d.ts</div>
<div class="t" style="left:848px;top:80px;color:#89b4fa;font-weight:bold;">index.js</div>
<div class="t" style="left:848px;top:100px;color:#cdd6f4;">index.mjs</div>
<div class="t" style="left:848px;top:120px;color:#89b4fa;font-weight:bold;">index.umd.js</div>
<div class="t" style="left:848px;top:140px;color:#89b4fa;font-weight:bold;">locales</div>
<div class="t" style="left:880px;top:160px;color:#89b4fa;font-weight:bold;">en.d.ts</div>
<div class="t" style="left:880px;top:180px;color:#89b4fa;font-weight:bold;">en.js</div>
<div class="t" style="left:848px;top:200px;color:#89b4fa;font-weight:bold;">standard-schema.d.ts</div>
<div class="t" style="left:848px;top:220px;color:#89b4fa;font-weight:bold;">standard-schema.js</div>
<div class="t" style="left:848px;top:240px;color:#89b4fa;font-weight:bold;">types.d.ts</div>
<div class="t" style="left:848px;top:260px;color:#89b4fa;font-weight:bold;">types.js</div>
<div class="t" style="left:848px;top:280px;color:#89b4fa;font-weight:bold;">ZodError.d.ts</div>
<div class="t" style="left:848px;top:300px;color:#89b4fa;font-weight:bold;">ZodError.js</div>
<div class="t" style="left:816px;top:320px;color:#cdd6f4;">LICENSE</div>
<div class="t" style="left:816px;top:340px;color:#5c5f77;font-weight:bold;text-decoration:underline;">package.json</div>
<div class="t" style="left:816px;top:360px;color:#5c5f77;font-weight:bold;text-decoration:underline;">README.md</div>
<div class="t" style="left:752px;top:380px;color:#5c5f77;font-weight:bold;text-decoration:underline;">package.json</div>
<div class="t" style="left:752px;top:400px;color:#5c5f77;font-weight:bold;text-decoration:underline;">README.md</div>
<div class="t" style="left:752px;top:420px;color:#89b4fa;font-weight:bold;">src</div>
<div class="t" style="left:784px;top:440px;color:#89b4fa;font-weight:bold;">index.ts</div>
<div class="t" style="left:784px;top:460px;color:#89b4fa;font-weight:bold;">log.ts</div>
<div class="t" style="left:784px;top:480px;color:#5c5f77;font-weight:bold;text-decoration:underline;">tsconfig.json</div>
<div class="t" style="left:752px;top:500px;color:#cdd6f4;">test-layout.kdl</div>
<div class="t" style="left:752px;top:520px;color:#5c5f77;font-weight:bold;text-decoration:underline;">tsconfig.json</div>
<div class="t" style="left:720px;top:540px;color:#89b4fa;font-weight:bold;">zj</div>
<div class="t" style="left:752px;top:560px;color:#cdd6f4;">AGENTS.md</div>
<div class="t" style="left:752px;top:580px;color:#89b4fa;font-weight:bold;">bin</div>
<div class="t" style="left:784px;top:600px;color:#a6e3a1;font-weight:bold;">zj</div>
<div class="t" style="left:784px;top:620px;color:#a6e3a1;font-weight:bold;">zj_clear</div>
<div class="t" style="left:784px;top:640px;color:#a6e3a1;font-weight:bold;">zj_tab_rename</div>
<div class="t" style="left:752px;top:660px;color:#89b4fa;font-weight:bold;">layouts</div>
<div class="t" style="left:784px;top:680px;color:#cdd6f4;">ide.kdl</div>
<div class="t" style="left:784px;top:700px;color:#cdd6f4;">ide_claude.kdl</div>
<div class="t" style="left:784px;top:720px;color:#cdd6f4;">ide_stacked.kdl</div>
<div class="t" style="left:752px;top:740px;color:#cdd6f4;">LICENSE</div>
<div class="t" style="left:752px;top:760px;color:#5c5f77;font-weight:bold;text-decoration:underline;">Makefile</div>
<div class="t" style="left:752px;top:780px;color:#5c5f77;font-weight:bold;text-decoration:underline;">README.md</div>
<div class="t" style="left:752px;top:800px;color:#89b4fa;font-weight:bold;">tests</div>
<div class="t" style="left:784px;top:820px;color:#5c5f77;font-weight:bold;text-decoration:underline;">README.md</div>
<div class="t" style="left:784px;top:840px;color:#a6e3a1;font-weight:bold;">run_tests.sh</div>
<div class="t" style="left:784px;top:860px;color:#cdd6f4;">test_zj.bats</div>
<div class="t" style="left:784px;top:880px;color:#cdd6f4;">test_zj_clear.bats</div>
<div class="t" style="left:784px;top:900px;color:#cdd6f4;">test_zj_tab_rename.bats</div>
<div class="t" style="left:16px;top:940px;color:#45475a;font-weight:bold;">CHANNEL</div>
<div class="t" style="left:88px;top:940px;color:#89b4fa;font-weight:bold;">sesh</div>
<div class="t" style="left:392px;top:940px;color:#5c5f77;font-weight:bold;">[Hint]</div>
<div class="t" style="left:448px;top:940px;color:#a6adc8;">Remote Control:</div>
<div class="t" style="left:576px;top:940px;color:#a6e3a1;font-weight:bold;">ctrl-t</div>
<div class="t" style="left:648px;top:940px;color:#a6adc8;">Hide Preview:</div>
<div class="t" style="left:760px;top:940px;color:#a6e3a1;font-weight:bold;">ctrl-o</div>
<div class="t" style="left:832px;top:940px;color:#a6adc8;">Help:</div>
<div class="t" style="left:880px;top:940px;color:#a6e3a1;font-weight:bold;">ctrl-h</div>
<div class="t" style="left:1240px;top:940px;color:#89b4fa;font-style:italic;transform:skewX(-7deg);transform-origin:0 15px;">v0.13.11</div>
</body></html>
